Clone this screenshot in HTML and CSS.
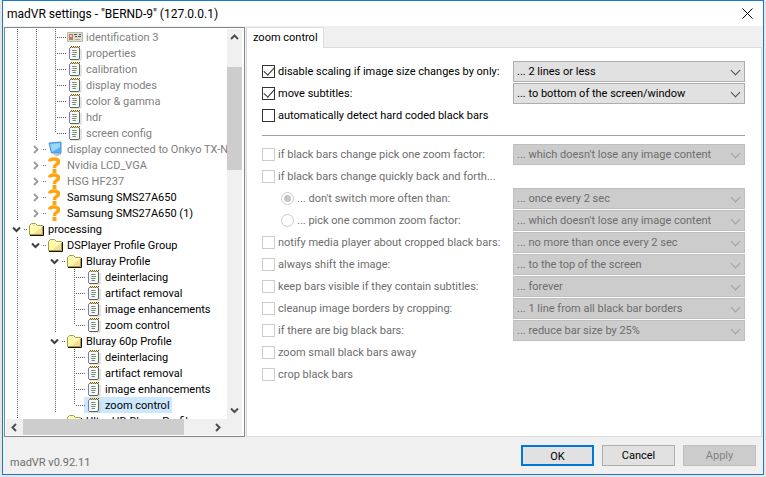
FILE: index.html
```html
<!DOCTYPE html>
<html lang="en">
<head>
    <meta charset="utf-8">
    <title>madVR settings</title>
    <link rel="stylesheet" href="styles.css">
</head>
<body>
    <svg class="sprite" aria-hidden="true">
        <symbol id="note" viewBox="0 0 16 16">
            <path d="M4 15h10V4" fill="none" stroke="#ccc"/>
            <path d="M3 2h9v12H3z" fill="#f6faf4"/>
            <path d="M2.500 3v11" stroke="#7b7bc4"/>
            <path d="M12.500 3v10q0 1.500-1.500 1.500H3" fill="none" stroke="#5e6462"/>
            <path d="M3 2.500h10" stroke="#e2bd62"/>
            <path d="M3 2.500h10" stroke="#8a6a24" stroke-dasharray="1 1"/>
            <path d="M4 1.500h9" stroke="#6b5626" stroke-dasharray="1 1"/>
            <path d="M5 5.500h4M6 7.500h4M5 9.500h4M6 11.500h3" stroke="#7c8884"/>
            <path d="M9 5.500h1M5 7.500h1M9 9.500h1M5 11.500h1" stroke="#b4c8b0"/>
        </symbol>
        <symbol id="folder" viewBox="0 0 16 16">
            <path d="M.5 13.500V4.500L2.500 2.500h4L8.500 4.500h5v9z" fill="#fffaa6" stroke="#a3a03e"/>
            <path d="M1.500 5.500h12" stroke="#fffde0"/>
            <path d="M4 13l9-7v7z" fill="#f7dc96"/>
            <path d="M1 14.500h13.500V5" fill="none" stroke="#111"/>
        </symbol>
        <symbol id="question" viewBox="0 0 16 16">
            <path d="M1.500 4.500Q2 2 6 2Q10.500 2 10.500 4.800Q10.500 6.500 8.300 7.500Q6.500 8.500 6.500 11" fill="none" stroke="#ffa514" stroke-width="3.500"/>
            <path d="M4.500 12h4v4h-4z" fill="#ffa514"/>
        </symbol>
        <symbol id="monitor" viewBox="0 0 16 16">
            <path d="M5 13l8-1v2l-5 1.500z" fill="#c8c8c8"/>
            <path d="M1 2l12-1v11L3.500 12z" fill="#5aaef0" stroke="#4a90d8"/>
            <path d="M2 3l10-1v4L4 11z" fill="#9ad8fb"/>
        </symbol>
        <symbol id="card" viewBox="0 0 16 16">
            <path d="M.5 3.500h15v9H.5z" fill="#dcdfd0" stroke="#b8baa8"/>
            <path d="M2 5h4v6H2z" fill="#c07868"/>
            <path d="M3 6h2v2H3z" fill="#eccab8"/>
            <path d="M7 5.500h3M12 5.500h2M8 7.500h2M11 7.500h3" stroke="#555"/>
            <path d="M8 10.500h5" stroke="#a8aa9a"/>
        </symbol>
        <symbol id="down" viewBox="0 0 9 9"><path d="M1 2.500L4.500 6 8 2.500" fill="none" stroke="currentColor" stroke-width="2"/></symbol>
        <symbol id="right" viewBox="0 0 9 9"><path d="M3 1l3.500 3.500L3 8" fill="none" stroke="currentColor" stroke-width="2"/></symbol>
        <symbol id="up" viewBox="0 0 9 9"><path d="M1 6l3.500-3.500L8 6" fill="none" stroke="currentColor" stroke-width="2"/></symbol>
        <symbol id="left" viewBox="0 0 9 9"><path d="M6 1L2.500 4.500 6 8" fill="none" stroke="currentColor" stroke-width="2"/></symbol>
    </svg>

    <div class="window">
        <header class="titlebar">
            <h1>madVR settings - "BERND-9" (127.0.0.1)</h1>
            <button class="close" aria-label="Close">
                <svg width="11" height="11" viewBox="0 0 11 11"><path d="M.5.5l10 10M10.500.5l-10 10" stroke="#000" fill="none"/></svg>
            </button>
        </header>

        <main class="content">
            <nav class="tree-box">
                <div class="tree-view">
                    <ul class="tree" id="tree"></ul>
                    <div class="scroll-v">
                        <svg class="arrow"><use href="#up"/></svg>
                        <div class="thumb"></div>
                        <svg class="arrow"><use href="#down"/></svg>
                    </div>
                </div>
                <div class="scroll-h">
                    <svg class="arrow"><use href="#left"/></svg>
                    <div class="thumb"></div>
                    <svg class="arrow"><use href="#right"/></svg>
                </div>
            </nav>

            <section class="tabs">
                <div class="tab-row"><button class="tab">zoom control</button></div>
                <form class="panel">
                    <div class="row">
                        <label><input type="checkbox" checked>disable scaling if image size changes by only:</label>
                        <div class="select"><select aria-label="size change"><option>... 2 lines or less</option></select></div>
                    </div>
                    <div class="row">
                        <label><input type="checkbox" checked>move subtitles:</label>
                        <div class="select"><select aria-label="subtitle position"><option>... to bottom of the screen/window</option></select></div>
                    </div>
                    <div class="row">
                        <label><input type="checkbox">automatically detect hard coded black bars</label>
                    </div>
                    <hr>
                    <fieldset disabled>
                        <div class="row">
                            <label><input type="checkbox">if black bars change pick one zoom factor:</label>
                            <div class="select"><select aria-label="zoom factor"><option>... which doesn't lose any image content</option></select></div>
                        </div>
                        <div class="row">
                            <label><input type="checkbox">if black bars change quickly back and forth...</label>
                        </div>
                        <div class="row sub">
                            <label><input type="radio" name="switch" checked>... don't switch more often than:</label>
                            <div class="select"><select aria-label="switch interval"><option>... once every 2 sec</option></select></div>
                        </div>
                        <div class="row sub">
                            <label><input type="radio" name="switch">... pick one common zoom factor:</label>
                            <div class="select"><select aria-label="common zoom factor"><option>... which doesn't lose any image content</option></select></div>
                        </div>
                        <div class="row">
                            <label><input type="checkbox">notify media player about cropped black bars:</label>
                            <div class="select"><select aria-label="notify interval"><option>... no more than once every 2 sec</option></select></div>
                        </div>
                        <div class="row">
                            <label><input type="checkbox">always shift the image:</label>
                            <div class="select"><select aria-label="shift direction"><option>... to the top of the screen</option></select></div>
                        </div>
                        <div class="row">
                            <label><input type="checkbox">keep bars visible if they contain subtitles:</label>
                            <div class="select"><select aria-label="keep visible"><option>... forever</option></select></div>
                        </div>
                        <div class="row">
                            <label><input type="checkbox">cleanup image borders by cropping:</label>
                            <div class="select"><select aria-label="crop amount"><option>... 1 line from all black bar borders</option></select></div>
                        </div>
                        <div class="row">
                            <label><input type="checkbox">if there are big black bars:</label>
                            <div class="select"><select aria-label="big bars"><option>... reduce bar size by 25%</option></select></div>
                        </div>
                        <div class="row">
                            <label><input type="checkbox">zoom small black bars away</label>
                        </div>
                        <div class="row">
                            <label><input type="checkbox">crop black bars</label>
                        </div>
                    </fieldset>
                </form>
            </section>
        </main>

        <footer class="footer">
            <span class="version">madVR v0.92.11</span>
            <div class="buttons">
                <button class="btn default">OK</button>
                <button class="btn">Cancel</button>
                <button class="btn" disabled>Apply</button>
            </div>
        </footer>
    </div>

    <script src="script.js"></script>
</body>
</html>
```

FILE: styles.css
```css
* {
    box-sizing: border-box;
}

body {
    margin: 0;
    background: #e6e6e6;
    font: 11px/18px Roboto, Tahoma, sans-serif;
    color: #000;
}

button,
select {
    font: inherit;
    color: inherit;
}

.sprite {
    display: none;
}

.window {
    display: flex;
    flex-direction: column;
    height: calc(100vh - 2px);
    margin: 0 2px 2px;
    border: 1px solid #1979ca;
    background: #f0f0f0;
}

.titlebar {
    display: flex;
    align-items: center;
    justify-content: space-between;
    height: 25px;
    padding: 0 10px 0 4px;
    background: #fff;
}

h1 {
    margin: 0;
    font: 12px/16px Roboto, "Segoe UI", sans-serif;
}

.close {
    display: flex;
    padding: 0;
    border: none;
    background: none;
}

.content {
    flex: 1;
    display: flex;
    gap: 1px;
    min-height: 0;
    padding: 1px 1px 0;
}

/* left tree */
.tree-box {
    flex: 0 0 241px;
    display: flex;
    flex-direction: column;
    min-width: 0;
    padding: 1px 2px 1px 1px;
    border: 1px solid #828790;
    background: #fff;
}

.tree-view {
    flex: 1;
    display: flex;
    min-height: 0;
}

.tree {
    flex: 1;
    min-width: 0;
    margin: 0;
    padding: 0 0 0 2px;
    overflow: hidden;
    list-style: none;
}

.tree li {
    display: flex;
    height: 16px;
    white-space: nowrap;
}

.guide {
    position: relative;
    flex: 0 0 19px;
    height: 16px;
}

.guide.line::before,
.guide.mid::before,
.guide.end::before {
    content: '';
    position: absolute;
    left: 9px;
    top: 0;
    width: 1px;
    height: 16px;
    background: repeating-linear-gradient(#666 0 1px, transparent 1px 2px);
}

.guide.end::before {
    height: 8px;
}

.guide.mid::after,
.guide.end::after {
    content: '';
    position: absolute;
    left: 11px;
    right: -1px;
    top: 8px;
    height: 1px;
    background: repeating-linear-gradient(90deg, #666 0 1px, transparent 1px 2px);
}

.toggle {
    flex: 0 0 19px;
    display: flex;
    align-items: center;
    justify-content: space-between;
    padding-left: 4px;
    color: #404040;
}

.toggle::after {
    content: '';
    width: 3px;
    height: 1px;
    background: repeating-linear-gradient(90deg, #666 0 1px, transparent 1px 2px);
}

.toggle svg {
    width: 9px;
    height: 9px;
}

.toggle.closed {
    color: #a0a0a0;
}

.item {
    display: flex;
    gap: 3px;
    padding: 0 2px;
}

.item svg {
    width: 16px;
    height: 16px;
}

.item.selected {
    background: #cce8ff;
}

.item.off {
    color: #808080;
}

.scroll-v,
.scroll-h {
    display: flex;
    align-items: center;
    background: #f0f0f0;
    color: #505050;
}

.scroll-v {
    flex: 0 0 15px;
    flex-direction: column;
    padding: 4px 0;
}

.scroll-h {
    flex: 0 0 16px;
    padding: 0 20px 0 4px;
}

.arrow {
    flex: none;
    width: 9px;
    height: 9px;
}

.scroll-v .thumb {
    width: 15px;
    height: 27%;
    margin: 25px 0 auto;
    background: #cdcdcd;
}

.scroll-h .thumb {
    width: 161px;
    height: 16px;
    margin: 0 auto 0 4px;
    background: #cdcdcd;
}

/* right side */
.tabs {
    flex: 1;
    display: flex;
    flex-direction: column;
    min-width: 0;
}

.tab-row {
    height: 20px;
}

.tab {
    position: relative;
    height: 21px;
    padding: 0 5px 0 6px;
    border: 1px solid #dcdcdc;
    border-bottom: none;
    background: #fff;
}

.panel {
    flex: 1;
    padding: 13px 16px 0 15px;
    border: 1px solid #dcdcdc;
    background: #fff;
}

.row {
    display: flex;
    justify-content: space-between;
    height: 22px;
}

.row label {
    display: flex;
    align-items: center;
    gap: 3px;
    height: 22px;
    white-space: nowrap;
}

.row.sub {
    padding-left: 19px;
}

input {
    appearance: none;
    display: flex;
    flex: none;
    align-items: center;
    justify-content: center;
    width: 13px;
    height: 13px;
    margin: 0 0 1px;
    border: 1px solid #333;
    background: #fff;
}

input[type="checkbox"]:checked::before {
    content: '';
    width: 5px;
    height: 9px;
    margin-bottom: 3px;
    border: solid #333;
    border-width: 0 1px 1px 0;
    transform: rotate(42deg);
}

input[type="radio"] {
    border-radius: 50%;
}

input[type="radio"]:checked::before {
    content: '';
    width: 7px;
    height: 7px;
    border-radius: 50%;
    background: #c4c4c4;
}

input:disabled {
    border-color: #ccc;
}

hr {
    height: 1px;
    margin: 8px 0;
    border: none;
    background: #a0a0a0;
}

fieldset {
    min-width: 0;
    margin: 0;
    padding: 0;
    border: none;
    color: #6d6d6d;
}

.select {
    position: relative;
    flex: 0 0 232px;
}

.select::after {
    content: '';
    position: absolute;
    right: 6px;
    top: 6px;
    width: 6px;
    height: 6px;
    border: solid #505050;
    border-width: 0 1px 1px 0;
    transform: rotate(45deg);
    pointer-events: none;
}

select {
    appearance: none;
    display: block;
    width: 100%;
    height: 21px;
    padding: 1px 20px 0 3px;
    border: 1px solid #adadad;
    border-radius: 0;
    background: #e1e1e1;
}

select:disabled {
    border-color: #bfbfbf;
    background: #ccc;
    color: #6d6d6d;
    opacity: 1;
}

fieldset .select::after {
    border-color: #a0a0a0;
}

/* bottom bar */
.footer {
    display: flex;
    justify-content: space-between;
    height: 37px;
    padding: 8px 7px 0;
}

.version {
    padding-top: 9px;
    color: #6d6d6d;
}

.buttons {
    display: flex;
    gap: 8px;
}

.btn {
    width: 73px;
    height: 21px;
    padding: 1px 0 0;
    border: 1px solid #adadad;
    background: #e1e1e1;
}

.btn.default {
    border: 2px solid #0078d7;
}

.btn:disabled {
    border-color: #bfbfbf;
    background: #ccc;
    color: #838383;
}
```

FILE: script.js
```js
// guides: l = line, m = branch, e = last branch, o = open, c = closed, - = empty
const rows = [
    ['llm', 'card', 'identification 3', 'off'],
    ['llm', 'note', 'properties', 'off'],
    ['llm', 'note', 'calibration', 'off'],
    ['llm', 'note', 'display modes', 'off'],
    ['llm', 'note', 'color & gamma', 'off'],
    ['llm', 'note', 'hdr', 'off'],
    ['lle', 'note', 'screen config', 'off'],
    ['lc', 'monitor', 'display connected to Onkyo TX-N', 'off'],
    ['lc', 'question', 'Nvidia LCD_VGA', 'off'],
    ['lc', 'question', 'HSG HF237', 'off'],
    ['lc', 'question', 'Samsung SMS27A650', ''],
    ['lc', 'question', 'Samsung SMS27A650 (1)', ''],
    ['o', 'folder', 'processing', ''],
    ['lo', 'folder', 'DSPlayer Profile Group', ''],
    ['l-o', 'folder', 'Bluray Profile', ''],
    ['l-lm', 'note', 'deinterlacing', ''],
    ['l-lm', 'note', 'artifact removal', ''],
    ['l-lm', 'note', 'image enhancements', ''],
    ['l-le', 'note', 'zoom control', ''],
    ['l-o', 'folder', 'Bluray 60p Profile', ''],
    ['l-lm', 'note', 'deinterlacing', ''],
    ['l-lm', 'note', 'artifact removal', ''],
    ['l-lm', 'note', 'image enhancements', ''],
    ['l-le', 'note', 'zoom control', 'selected'],
    ['l-o', 'folder', 'Ultra HD Bluray Profile', '']
];

const cells = {
    'l': '<span class="guide line"></span>',
    'm': '<span class="guide mid"></span>',
    'e': '<span class="guide end"></span>',
    '-': '<span class="guide"></span>',
    'o': '<span class="toggle"><svg><use href="#down"/></svg></span>',
    'c': '<span class="toggle closed"><svg><use href="#right"/></svg></span>'
};

const tree = document.getElementById('tree');

rows.forEach(([guides, icon, text, state]) => {
    const li = document.createElement('li');
    li.innerHTML = guides.split('').map(g => cells[g]).join('') +
        `<span class="item ${state}"><svg><use href="#${icon}"/></svg><span class="name"></span></span>`;
    li.querySelector('.name').textContent = text;
    tree.appendChild(li);
});
```
